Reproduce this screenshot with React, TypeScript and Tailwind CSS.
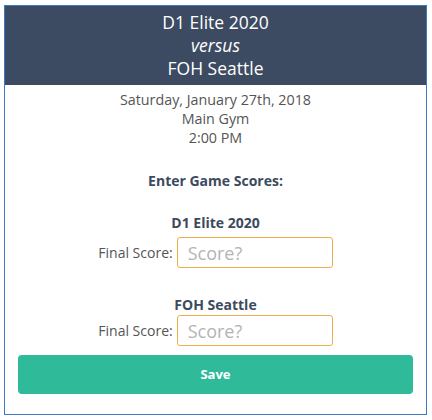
import React, { useState } from "react";

const ScoreRow: React.FC<{
  team: string;
  value: string;
  onChange: (v: string) => void;
  className?: string;
  inputGap?: string;
}> = ({ team, value, onChange, className = "", inputGap = "mt-[6px]" }) => (
  <div className={`flex flex-col items-center ${className}`}>
    <div className="font-bold text-[14px] leading-[19px] text-[#3d4a5e]">{team}</div>
    <div className={`flex items-center ${inputGap}`}>
      <label className="text-[14px] text-[#555] mr-[4px]">Final Score:</label>
      <input
        type="text"
        placeholder="Score?"
        value={value}
        onChange={(e) => onChange(e.target.value)}
        className="w-[156px] h-[31px] px-[10px] border border-[#f0ad4e] rounded-[3px] text-[18px] text-[#555] placeholder:text-[#b4b4b4] outline-none"
      />
    </div>
  </div>
);

export default function App() {
  const [home, setHome] = useState("");
  const [away, setAway] = useState("");

  return (
    <div className="bg-white w-[432px] h-[420px] pt-[5px] pl-[4px]" style={{ fontFamily: '"Open Sans", sans-serif' }}>
      <div className="w-[423px] h-[410px] border border-[#3b7ac0] flex flex-col">
        {/* header */}
        <div className="bg-[#3c4b62] text-white text-center text-[17.5px] leading-[23px] py-[5px]">
          <div>D1 Elite 2020</div>
          <div className="italic">versus</div>
          <div>FOH Seattle</div>
        </div>

        <div className="flex flex-col items-center px-[13px] text-[#555]">
          <div className="text-[14.3px] leading-[19px] pt-[5px] text-center">
            <div>Saturday, January 27th, 2018</div>
            <div>Main Gym</div>
            <div>2:00 PM</div>
          </div>

          <div className="mt-[24px] font-bold text-[14px] leading-[19px] text-[#3d4a5e]">Enter Game Scores:</div>

          <ScoreRow team="D1 Elite 2020" value={home} onChange={setHome} className="mt-[23px]" inputGap="mt-[5px]" />
          <ScoreRow team="FOH Seattle" value={away} onChange={setAway} className="mt-[27px]" inputGap="mt-[1px]" />

          <button className="mt-[9px] w-full h-[39px] rounded-[4px] bg-[#2fbb9a] text-white font-bold text-[13px]">
            Save
          </button>
        </div>
      </div>
    </div>
  );
}
